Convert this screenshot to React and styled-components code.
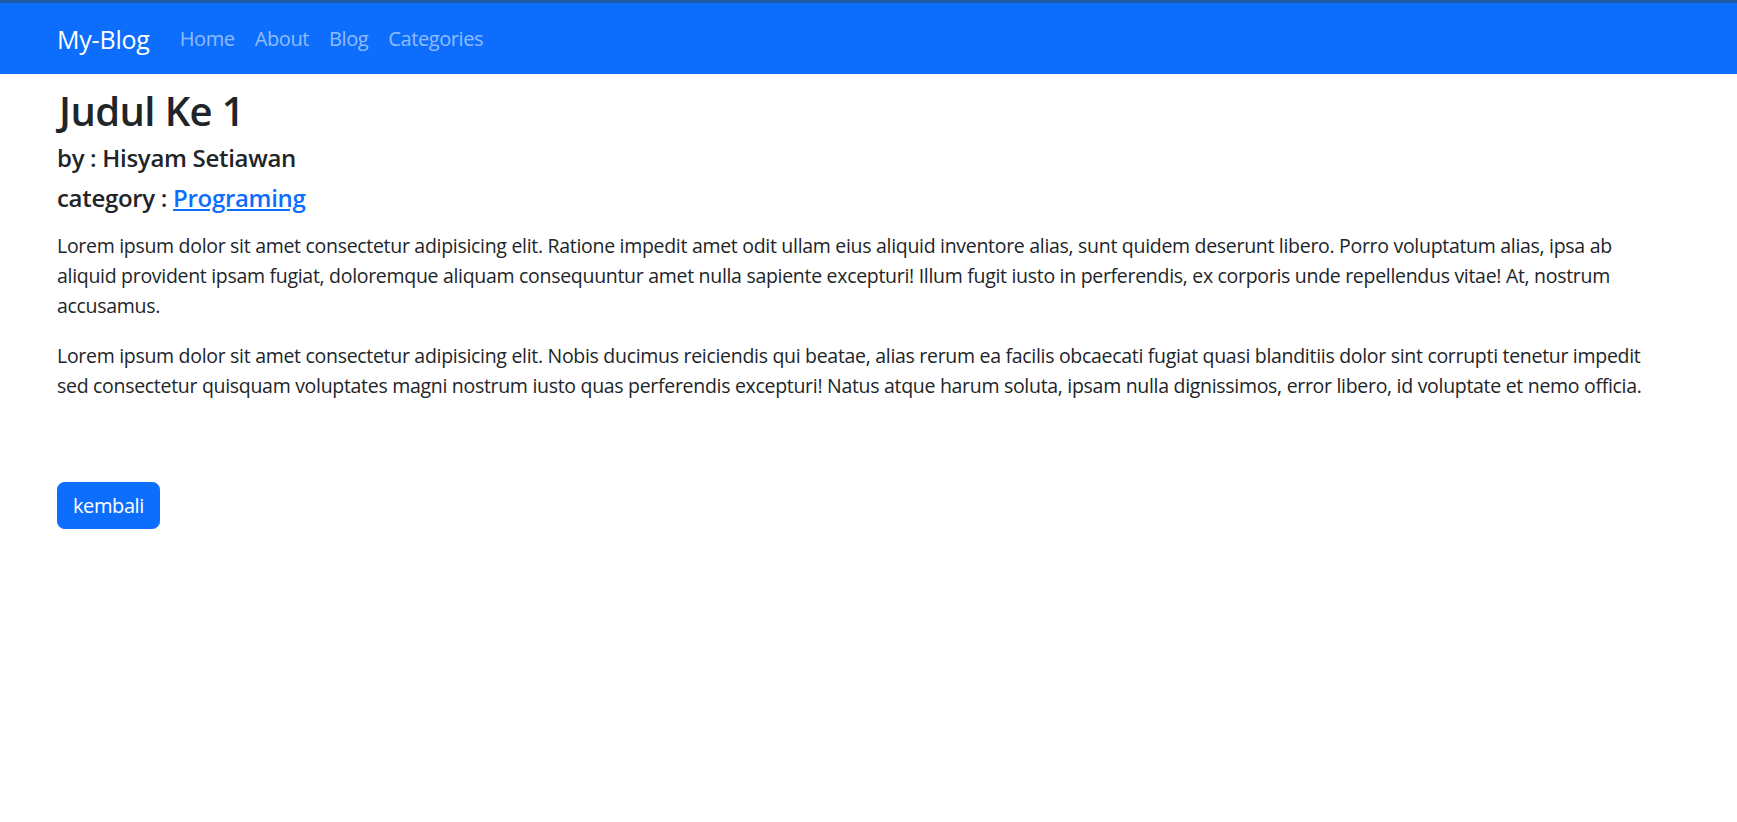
import React from "react";
import styled, { createGlobalStyle } from "styled-components";

const GlobalStyle = createGlobalStyle`
  html, body {
    margin: 0;
    padding: 0;
    background: #fff;
  }
  body {
    font-family: "Open Sans", "Noto Sans", sans-serif;
    font-size: 20px;
    line-height: 30px;
    color: #212529;
  }
  * {
    box-sizing: border-box;
  }
`;

const TopStripe = styled.div`
  height: 3px;
  background: #1d5ba3;
`;

const Navbar = styled.nav`
  height: 71px;
  background: #0d6efd;
  display: flex;
  align-items: center;
  padding: 0 57px 0 57px;
`;

const Brand = styled.a`
  font-size: 25px;
  line-height: 30px;
  color: #fff;
  text-decoration: none;
  margin-right: 20px;
  letter-spacing: -0.2px;
`;

const NavLinks = styled.div`
  display: flex;
`;

const NavLink = styled.a`
  padding: 0 10px;
  font-size: 20px;
  color: rgba(255, 255, 255, 0.55);
  text-decoration: none;
  letter-spacing: -0.4px;
`;

const Container = styled.main`
  padding: 13px 68px 0 57px;
`;

const Title = styled.h2`
  margin: 0 0 8px 2px;
  font-size: 40px;
  line-height: 48px;
  font-weight: 600;
  letter-spacing: -0.6px;
`;

const Meta = styled.h5`
  margin: 0 0 10px;
  font-size: 24px;
  line-height: 30px;
  font-weight: 600;
  letter-spacing: -0.3px;

  a {
    color: #0d6efd;
    text-decoration: underline;
  }
`;

const Paragraph = styled.p`
  margin: 0 0 20px;
  font-size: 19.5px;
  letter-spacing: -0.3px;

  &:first-of-type {
    margin-top: 18px;
  }
`;

const Button = styled.a`
  display: inline-block;
  margin-top: 61px;
  padding: 7.5px 15px;
  border: 1px solid #0d6efd;
  border-radius: 7.5px;
  background: #0d6efd;
  color: #fff;
  font-size: 20px;
  line-height: 30px;
  text-decoration: none;
  letter-spacing: -0.4px;
`;

export default function App() {
  return (
    <>
      <GlobalStyle />
      <TopStripe />
      <Navbar>
        <Brand href="#">My-Blog</Brand>
        <NavLinks>
          <NavLink href="#">Home</NavLink>
          <NavLink href="#">About</NavLink>
          <NavLink href="#">Blog</NavLink>
          <NavLink href="#">Categories</NavLink>
        </NavLinks>
      </Navbar>
      <Container>
        <Title>Judul Ke 1</Title>
        <Meta>by : Hisyam Setiawan</Meta>
        <Meta>
          category : <a href="#">Programing</a>
        </Meta>
        <Paragraph>
          Lorem ipsum dolor sit amet consectetur adipisicing elit. Ratione
          impedit amet odit ullam eius aliquid inventore alias, sunt quidem
          deserunt libero. Porro voluptatum alias, ipsa ab aliquid provident
          ipsam fugiat, doloremque aliquam consequuntur amet nulla sapiente
          excepturi! Illum fugit iusto in perferendis, ex corporis unde
          repellendus vitae! At, nostrum accusamus.
        </Paragraph>
        <Paragraph>
          Lorem ipsum dolor sit amet consectetur adipisicing elit. Nobis
          ducimus reiciendis qui beatae, alias rerum ea facilis obcaecati
          fugiat quasi blanditiis dolor sint corrupti tenetur impedit sed
          consectetur quisquam voluptates magni nostrum iusto quas perferendis
          excepturi! Natus atque harum soluta, ipsam nulla dignissimos, error
          libero, id voluptate et nemo officia.
        </Paragraph>
        <Button href="#">kembali</Button>
      </Container>
    </>
  );
}
